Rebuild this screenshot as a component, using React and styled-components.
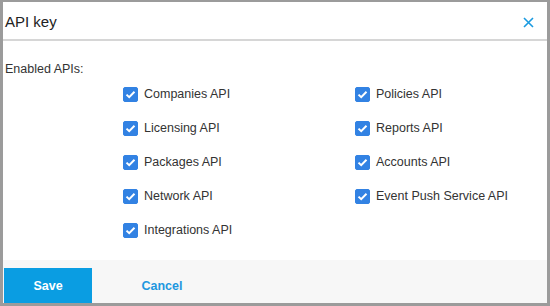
import React from 'react';
import styled, { createGlobalStyle } from 'styled-components';

const GlobalStyle = createGlobalStyle`
  html, body {
    margin: 0;
    padding: 0;
    background: #ffffff;
  }
  body {
    font-family: "Liberation Sans", Arial, sans-serif;
    color: #333333;
  }
`;

const Dialog = styled.div`
  width: 550px;
  height: 306px;
  box-sizing: border-box;
  border: 3px solid #9b9b9b;
  border-top-width: 2px;
  display: flex;
  flex-direction: column;
  background: #ffffff;
  overflow: hidden;
`;

const Header = styled.div`
  height: 37px;
  display: flex;
  align-items: center;
  justify-content: space-between;
  padding: 0 13px 0 2px;
  border-bottom: 2px solid #d6d6d6;
`;

const Title = styled.h1`
  margin: 0;
  font-size: 15px;
  font-weight: normal;
  color: #222222;
  padding-top: 1px;
`;

const CloseButton = styled.button`
  border: none;
  background: none;
  padding: 0;
  width: 11px;
  height: 11px;
  margin-top: 3px;
  display: flex;
  cursor: pointer;
`;

const Body = styled.div`
  flex: 1;
  padding: 20px 0 0 2px;
`;

const FieldLabel = styled.div`
  font-size: 12.5px;
  line-height: 16px;
  color: #333333;
`;

const ApiGrid = styled.div`
  display: grid;
  grid-template-columns: 232px auto;
  grid-template-rows: repeat(5, 34px);
  grid-auto-flow: column;
  margin-left: 118px;
`;

const Option = styled.label`
  display: flex;
  align-items: center;
  gap: 6px;
  font-size: 12.5px;
  color: #333333;
  cursor: pointer;
`;

const Box = styled.span`
  width: 15px;
  height: 15px;
  box-sizing: border-box;
  border-radius: 2px;
  background: ${p => (p.checked ? '#3282e3' : '#ffffff')};
  border: 1px solid ${p => (p.checked ? '#3282e3' : '#767676')};
  display: flex;
  align-items: center;
  justify-content: center;
`;

const Footer = styled.div`
  height: 43px;
  box-sizing: border-box;
  background: #f7f7f7;
  padding: 8px 0 0 1px;
  display: flex;
  gap: 26px;
`;

const Button = styled.button`
  width: 88px;
  height: 35px;
  border: none;
  font-family: "Liberation Sans", Arial, sans-serif;
  font-size: 12.5px;
  font-weight: bold;
  cursor: pointer;
  background: ${p => (p.primary ? '#0a9de2' : 'transparent')};
  color: ${p => (p.primary ? '#ffffff' : '#1f97df')};
`;

const apis = [
  'Companies API',
  'Licensing API',
  'Packages API',
  'Network API',
  'Integrations API',
  'Policies API',
  'Reports API',
  'Accounts API',
  'Event Push Service API',
];

function Checkbox({ checked }) {
  return (
    <Box checked={checked}>
      {checked && (
        <svg width="11" height="9" viewBox="0 0 11 9">
          <path d="M1.5 4.6 L4.2 7.2 L9.5 1.8" fill="none" stroke="#ffffff" strokeWidth="2" />
        </svg>
      )}
    </Box>
  );
}

export default function App() {
  return (
    <>
      <GlobalStyle />
      <Dialog>
        <Header>
          <Title>API key</Title>
          <CloseButton aria-label="Close">
            <svg width="11" height="11" viewBox="0 0 11 11">
              <path d="M1 1 L10 10 M10 1 L1 10" stroke="#1a9ae0" strokeWidth="1.6" />
            </svg>
          </CloseButton>
        </Header>
        <Body>
          <FieldLabel>Enabled APIs:</FieldLabel>
          <ApiGrid>
            {apis.map(name => (
              <Option key={name}>
                <Checkbox checked />
                {name}
              </Option>
            ))}
          </ApiGrid>
        </Body>
        <Footer>
          <Button primary>Save</Button>
          <Button>Cancel</Button>
        </Footer>
      </Dialog>
    </>
  );
}
